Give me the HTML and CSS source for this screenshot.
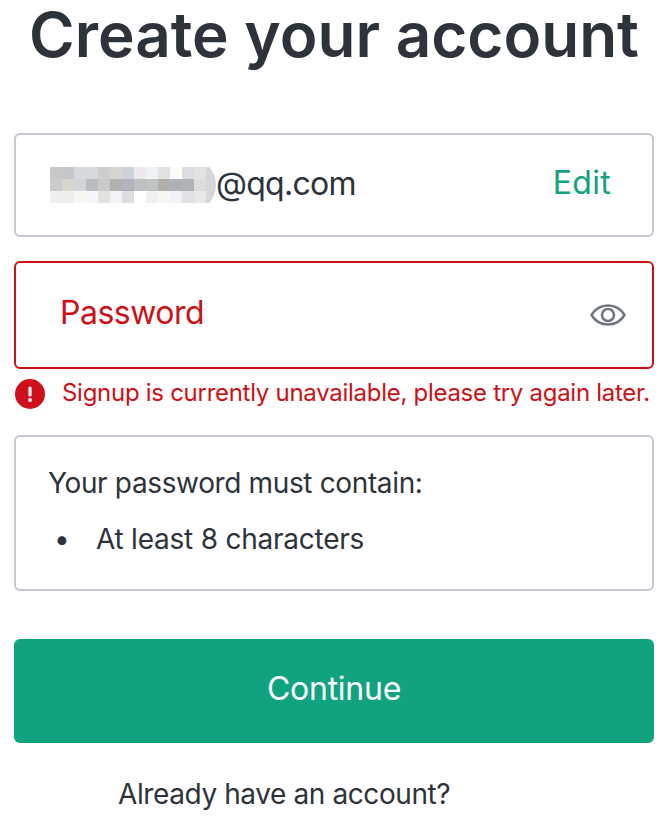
FILE: index.html
```html
<!DOCTYPE html>
<html lang="en">
<head>
<meta charset="utf-8">
<title>Create your account</title>
<link rel="stylesheet" href="styles.css">
</head>
<body>
<main class="page">
  <h1 class="title">Create your account</h1>
  <div class="field field-email">
    <div class="email">
      <svg class="mosaic" width="166" height="36" viewBox="0 0 166 36" aria-hidden="true">
        <g>
          <rect x="0" y="0" width="12" height="12" fill="#c8c8c8"/><rect x="12" y="0" width="12" height="12" fill="#c4c6c8"/><rect x="24" y="0" width="12" height="12" fill="#d5d9de"/><rect x="36" y="0" width="12" height="12" fill="#d8d9de"/><rect x="48" y="0" width="12" height="12" fill="#cfcdd0"/><rect x="60" y="0" width="12" height="12" fill="#d8d6d3"/><rect x="72" y="0" width="12" height="12" fill="#ccd1da"/><rect x="84" y="0" width="12" height="12" fill="#ebeae8"/><rect x="96" y="0" width="12" height="12" fill="#f0f3f6"/><rect x="108" y="0" width="12" height="12" fill="#e0e1e1"/><rect x="120" y="0" width="12" height="12" fill="#fdfbf9"/><rect x="132" y="0" width="12" height="12" fill="#dcdde1"/><rect x="144" y="0" width="12" height="12" fill="#e4e2e0"/>
          <rect x="0" y="12" width="12" height="12" fill="#c9cbcc"/><rect x="12" y="12" width="12" height="12" fill="#d9d6d0"/><rect x="24" y="12" width="12" height="12" fill="#d2d6da"/><rect x="36" y="12" width="12" height="12" fill="#b8bdc0"/><rect x="48" y="12" width="12" height="12" fill="#cbcbcd"/><rect x="60" y="12" width="12" height="12" fill="#b4b1b3"/><rect x="72" y="12" width="12" height="12" fill="#b3b3b9"/><rect x="84" y="12" width="12" height="12" fill="#bcc1c4"/><rect x="96" y="12" width="12" height="12" fill="#c0c4c5"/><rect x="108" y="12" width="12" height="12" fill="#b3aeac"/><rect x="120" y="12" width="12" height="12" fill="#aab0b4"/><rect x="132" y="12" width="12" height="12" fill="#b0b2b6"/><rect x="144" y="12" width="12" height="12" fill="#dddbdc"/>
          <rect x="0" y="24" width="12" height="12" fill="#efefef"/><rect x="12" y="24" width="12" height="12" fill="#f0eeec"/><rect x="24" y="24" width="12" height="12" fill="#f8f7f4"/><rect x="36" y="24" width="12" height="12" fill="#f5f6f7"/><rect x="48" y="24" width="12" height="12" fill="#e3e2de"/><rect x="60" y="24" width="12" height="12" fill="#f2f3f5"/><rect x="72" y="24" width="12" height="12" fill="#dcdde0"/><rect x="84" y="24" width="12" height="12" fill="#ffffff"/><rect x="96" y="24" width="12" height="12" fill="#f0f0f0"/><rect x="108" y="24" width="12" height="12" fill="#f7f6f2"/><rect x="120" y="24" width="12" height="12" fill="#f2f3f5"/><rect x="132" y="24" width="12" height="12" fill="#e0e1e5"/><rect x="144" y="24" width="12" height="12" fill="#e8e8e6"/>
          <path d="M156 0h3q7 8 7 18t-7 18h-3z" fill="#d4d6dc"/>
        </g>
      </svg>
      <span class="email-text">@qq.com</span>
    </div>
    <a class="edit" href="#">Edit</a>
  </div>
  <div class="field field-password">
    <span class="password-label">Password</span>
    <svg class="eye" width="38" height="38" viewBox="0 0 38 38" fill="none" stroke="#6e7681" stroke-width="2.6" aria-hidden="true">
      <path d="M2.5 19C6 13.2 12 9.5 19 9.5S32 13.2 35.5 19C32 24.800 26 28.500 19 28.500S6 24.800 2.500 19Z" stroke-linejoin="round"/>
      <circle cx="19" cy="19" r="6"/>
    </svg>
  </div>
  <div class="error">
    <svg class="error-icon" width="30" height="30" viewBox="0 0 30 30" aria-hidden="true">
      <circle cx="15" cy="15" r="15" fill="#cf101c"/>
      <rect x="13.400" y="7.500" width="3.200" height="10" rx="1.600" fill="#fff"/>
      <circle cx="15" cy="21" r="1.900" fill="#fff"/>
    </svg>
    <span class="error-text">Signup is currently unavailable, please try again later.</span>
  </div>
  <div class="rules">
    <p class="rules-head">Your password must contain:</p>
    <ul class="rules-list">
      <li class="rules-item">At least 8 characters</li>
    </ul>
  </div>
  <button class="continue" type="button"><span class="continue-text">Continue</span></button>
  <p class="login">Already have an account?</p>
</main>
</body>
</html>
```
FILE: styles.css
```css
html, body {
  margin: 0;
  background: #fff;
  height: 817px;
  overflow: hidden;
}
body {
  font-family: Inter, "Noto Sans", sans-serif;
  color: #2d333a;
}
.page {
  width: 640px;
  margin-left: 14px;
}
.title {
  margin: 0;
  height: 133px;
  box-sizing: border-box;
  font-size: 62px;
  line-height: 70px;
  font-weight: 600;
  text-align: center;
  white-space: nowrap;
  color: #2d333a;
}
.field {
  box-sizing: border-box;
  width: 640px;
  display: flex;
  align-items: center;
  justify-content: space-between;
  background: #fff;
}
.field-email {
  height: 104px;
  border: 2px solid #c2c8d0;
  border-radius: 6px;
  padding: 0 41px 0 34px;
}
.email {
  display: flex;
  align-items: center;
  font-size: 32px;
}
.email-text {
  letter-spacing: -0.7px;
  padding-bottom: 4px;
}
.mosaic {
  display: block;
}
.edit {
  color: #10a37f;
  text-decoration: none;
  font-size: 32px;
  letter-spacing: 0.3px;
  padding-bottom: 6px;
}
.field-password {
  height: 108px;
  margin-top: 24px;
  border: 2px solid #cd1015;
  border-radius: 6px;
  padding: 0 25px 0 44px;
}
.password-label {
  font-size: 32px;
  letter-spacing: -0.5px;
  color: #cd1015;
  padding-bottom: 6px;
}
.eye {
  display: block;
}
.error {
  display: flex;
  align-items: center;
  gap: 17px;
  height: 50px;
  padding-left: 1px;
  font-size: 24px;
  color: #cd1015;
  white-space: nowrap;
}
.error-text {
  letter-spacing: -0.28px;
  padding-bottom: 4px;
}
.error-icon {
  display: block;
  flex: none;
}
.rules {
  box-sizing: border-box;
  height: 156px;
  margin-top: 16px;
  padding: 28px 31px 0 32px;
  border: 2px solid #c2c8d0;
  border-radius: 6px;
  font-size: 28px;
  letter-spacing: -0.36px;
}
.rules-head {
  margin: 0;
  line-height: 36px;
}
.rules-list {
  margin: 20px 0 0;
  padding: 0;
  list-style: none;
  line-height: 36px;
  letter-spacing: -0.23px;
}
.rules-item {
  display: flex;
}
.rules-item::before {
  content: "•";
  width: 48px;
  padding-left: 6px;
  box-sizing: border-box;
  flex: none;
}
.continue {
  display: block;
  width: 640px;
  height: 104px;
  margin-top: 48px;
  padding: 0 0 6px;
  border: 0;
  border-radius: 6px;
  background: #10a37f;
  color: #fff;
  font-family: inherit;
  font-size: 32px;
}
.continue-text {
  letter-spacing: -0.25px;
}
.login {
  margin: 32px 0 0;
  padding-left: 104px;
  font-size: 28px;
  letter-spacing: -0.4px;
  line-height: 38px;
  white-space: nowrap;
}
```
